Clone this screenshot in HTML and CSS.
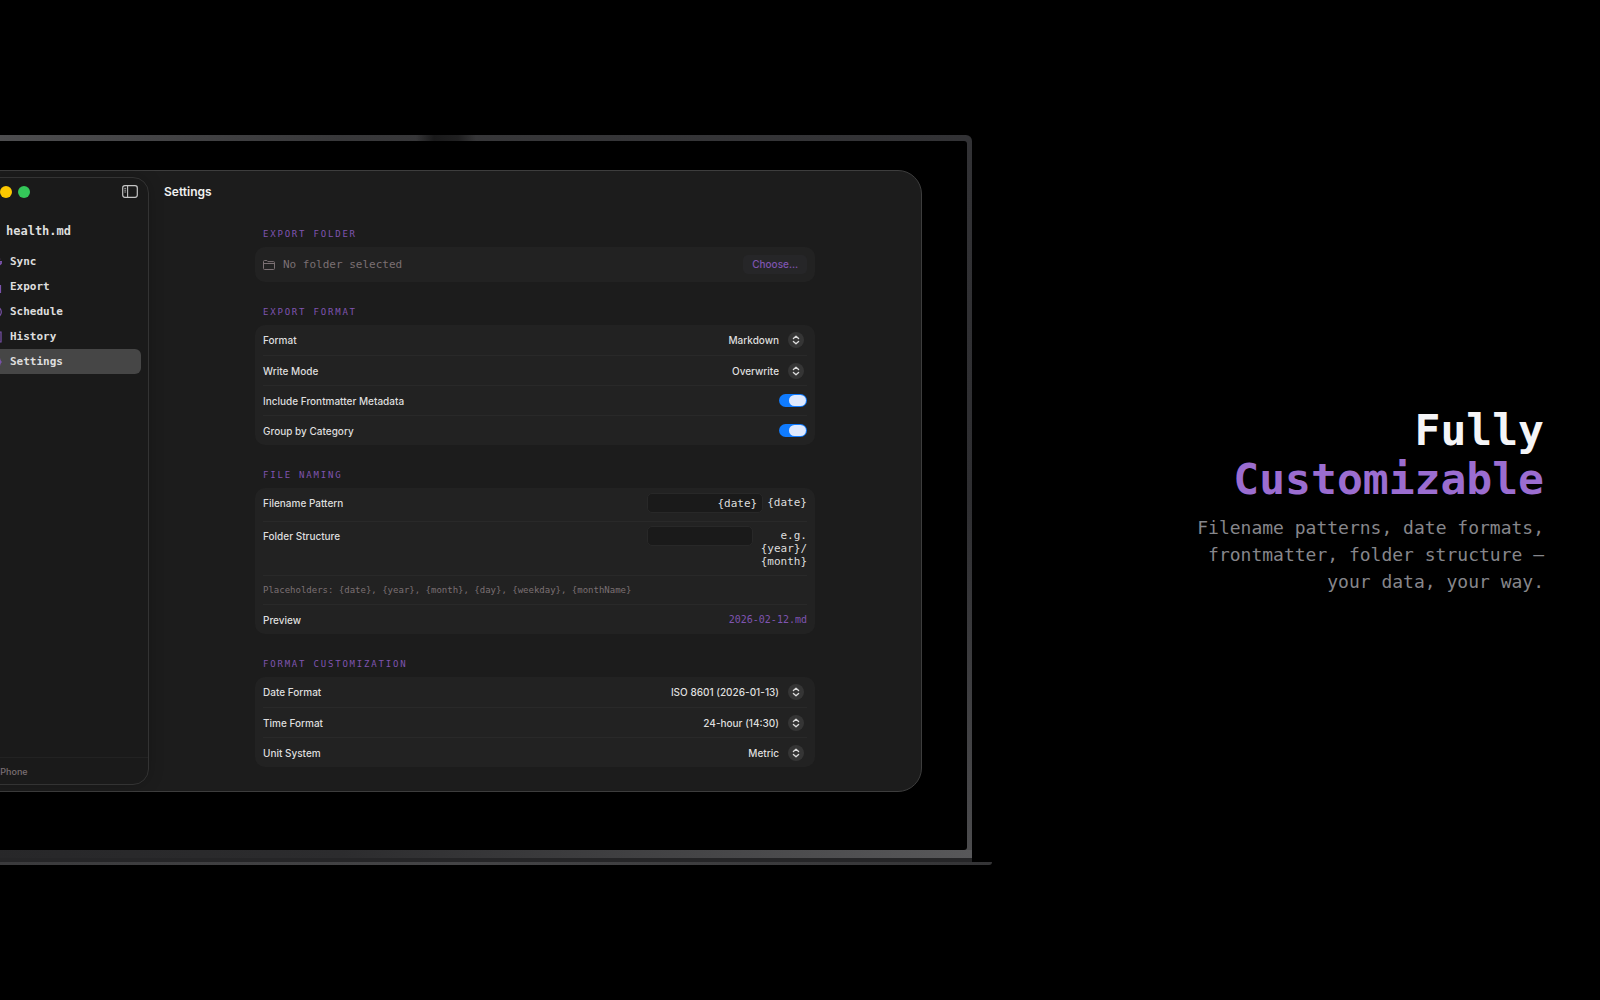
FILE: index.html
```html
<!DOCTYPE html>
<html lang="en">
<head>
    <meta charset="UTF-8">
    <meta name="viewport" content="width=device-width, initial-scale=1">
    <title>health.md - Fully Customizable</title>
    <link rel="stylesheet" href="styles.css">
</head>
<body>

    <!-- Shared icons -->
    <svg class="icon-defs" aria-hidden="true">
        <symbol id="updown" viewBox="0 0 16 16">
            <circle cx="8" cy="8" r="8" fill="#353535"/>
            <path d="M5.4 6.6 8 4.2l2.6 2.4M5.4 9.4 8 11.8l2.6-2.4" fill="none" stroke="#dcdcdc" stroke-width="1.3" stroke-linecap="round" stroke-linejoin="round"/>
        </symbol>
    </svg>

    <!-- Laptop -->
    <div class="laptop">
        <div class="lid">
            <div class="screen">
                <div class="window">

                    <!-- Sidebar -->
                    <aside class="sidebar">
                        <div class="sidebar-top">
                            <span class="light red"></span>
                            <span class="light yellow"></span>
                            <span class="light green"></span>
                            <button class="toggle-sidebar" type="button" aria-label="Toggle sidebar">
                                <svg width="16" height="13" viewBox="0 0 16 13" fill="none" stroke="#c4c4c4">
                                    <rect x="0.7" y="0.7" width="14.6" height="11.6" rx="2.2" stroke-width="1.2"/>
                                    <path d="M5.6 1v11" stroke-width="1.1"/>
                                    <path d="M2.3 3.4h1.8M2.3 5.2h1.8M2.3 7h1.8" stroke-width="0.8"/>
                                </svg>
                            </button>
                        </div>
                        <div class="brand">health.md</div>
                        <nav>
                            <a href="#sync">
                                <svg class="nav-icon" viewBox="0 0 12 12"><path d="M1 5a5 5 0 0 1 9-1.5M11 6a5 5 0 0 1-9 2.5"/><path d="M9 5.500h3.500L10.800 8zM3 6.500H-.5L1.200 4z"/></svg>
                                Sync
                            </a>
                            <a href="#export">
                                <svg class="nav-icon" viewBox="0 0 12 12"><path d="M4 4.500H1.500v7h9v-7H8M6 8V1M3.800 3 6 .8 8.200 3"/></svg>
                                Export
                            </a>
                            <a href="#schedule">
                                <svg class="nav-icon" viewBox="0 0 12 12"><circle cx="6" cy="6" r="5.300"/><path d="M6 3v3.300L8 7.500"/></svg>
                                Schedule
                            </a>
                            <a href="#history">
                                <svg class="nav-icon" viewBox="0 0 12 12"><path d="M1 1h10v10H1zM3 4h6M3 6h6M3 8h4"/></svg>
                                History
                            </a>
                            <a class="active" href="#settings">
                                <svg class="nav-icon" viewBox="0 0 12 12"><circle cx="6" cy="6" r="4.500"/><circle cx="6" cy="6" r="1.500"/><path d="M6 0v2M6 10v2M0 6h2M10 6h2M2 2l1 1M9 9l1 1M2 10l1-1M9 3l1-1"/></svg>
                                Settings
                            </a>
                        </nav>
                        <div class="device"><span class="dot"></span>iPhone</div>
                    </aside>

                    <!-- Settings -->
                    <main>
                        <h1>Settings</h1>
                        <form class="settings">

                            <section>
                                <h2>EXPORT FOLDER</h2>
                                <div class="card">
                                    <div class="row folder-row">
                                        <svg width="12" height="10" viewBox="0 0 12 10" fill="none" stroke="#7b7073" stroke-linejoin="round">
                                            <path d="M.5 8.500v-7q0-1 1-1h2.400l1 1.100h5.600q1 0 1 1v5.900q0 1-1 1h-9q-1 0-1-1zM.5 3.500h11"/>
                                        </svg>
                                        <span class="folder-name">No folder selected</span>
                                        <button class="choose" type="button">Choose…</button>
                                    </div>
                                </div>
                            </section>

                            <section>
                                <h2>EXPORT FORMAT</h2>
                                <div class="card">
                                    <div class="row">
                                        <label for="format">Format</label>
                                        <select id="format">
                                            <option>Markdown</option>
                                            <option>JSON</option>
                                            <option>CSV</option>
                                        </select>
                                        <svg class="updown"><use href="#updown"/></svg>
                                    </div>
                                    <div class="row">
                                        <label for="writeMode">Write Mode</label>
                                        <select id="writeMode">
                                            <option>Overwrite</option>
                                            <option>Append</option>
                                        </select>
                                        <svg class="updown"><use href="#updown"/></svg>
                                    </div>
                                    <div class="row">
                                        <label for="frontmatter">Include Frontmatter Metadata</label>
                                        <input class="switch" type="checkbox" id="frontmatter" checked>
                                    </div>
                                    <div class="row">
                                        <label for="group">Group by Category</label>
                                        <input class="switch" type="checkbox" id="group" checked>
                                    </div>
                                </div>
                            </section>

                            <section>
                                <h2>FILE NAMING</h2>
                                <div class="card">
                                    <div class="row field-row">
                                        <label for="filename">Filename Pattern</label>
                                        <div class="field">
                                            <input type="text" id="filename" value="{date}">
                                            <span class="hint">{date}</span>
                                        </div>
                                    </div>
                                    <div class="row field-row">
                                        <label for="folder">Folder Structure</label>
                                        <div class="field">
                                            <input type="text" id="folder">
                                            <span class="hint hint-wrap">e.g. {year}/<wbr>{month}</span>
                                        </div>
                                    </div>
                                    <div class="row placeholders">Placeholders: {date}, {year}, {month}, {day}, {weekday}, {monthName}</div>
                                    <div class="row">
                                        <span>Preview</span>
                                        <output class="preview">2026-02-12.md</output>
                                    </div>
                                </div>
                            </section>

                            <section>
                                <h2>FORMAT CUSTOMIZATION</h2>
                                <div class="card">
                                    <div class="row">
                                        <label for="dateFormat">Date Format</label>
                                        <select id="dateFormat">
                                            <option>ISO 8601 (2026-01-13)</option>
                                        </select>
                                        <svg class="updown"><use href="#updown"/></svg>
                                    </div>
                                    <div class="row">
                                        <label for="timeFormat">Time Format</label>
                                        <select id="timeFormat">
                                            <option>24-hour (14:30)</option>
                                        </select>
                                        <svg class="updown"><use href="#updown"/></svg>
                                    </div>
                                    <div class="row">
                                        <label for="units">Unit System</label>
                                        <select id="units">
                                            <option>Metric</option>
                                            <option>Imperial</option>
                                        </select>
                                        <svg class="updown"><use href="#updown"/></svg>
                                    </div>
                                </div>
                            </section>

                        </form>
                    </main>
                </div>
            </div>
        </div>
        <div class="hinge"></div>
        <div class="base"></div>
    </div>

    <!-- Caption -->
    <div class="caption">
        <p class="headline">Fully<br><span>Customizable</span></p>
        <p class="tagline">Filename patterns, date formats, frontmatter, folder structure — your data, your way.</p>
    </div>

</body>
</html>
```

FILE: styles.css
```css
* {
    box-sizing: border-box;
}

body {
    margin: 0;
    min-height: 100vh;
    display: flex;
    align-items: center;
    overflow: hidden;
    background-color: #000;
    color: #dedede;
    font-family: Inter, sans-serif;
    font-size: 10px;
    font-weight: 500;
}

h1, h2, p {
    margin: 0;
}

button, select, input {
    font: inherit;
    color: inherit;
    margin: 0;
    padding: 0;
    border: none;
    background: none;
}

.icon-defs {
    display: none;
}

/* Laptop, runs off the left edge */
.laptop {
    flex: none;
    width: calc(62% + 80px);
    margin-left: -80px;
}

.lid {
    margin-right: 20px;
    padding: 6px 5px 8px;
    border-radius: 6px 6px 0 0;
    background:
        linear-gradient(90deg, transparent, #1a1a1b 30%, #202021 70%, transparent) 50% 0 / 60px 6px no-repeat,
        linear-gradient(90deg, #525254, #38383a 40%, #323235) 0 0 / 100% 6px no-repeat,
        linear-gradient(90deg, #262628, #2c2c2e 40%, #58585a) 0 100% / 100% 8px no-repeat,
        linear-gradient(180deg, #323235, #2e2e31 50%, #4c4c4e);
}

.screen {
    padding: 29px 45px 58px;
    border-radius: 3px;
    background-color: #000;
}

.hinge {
    height: 4px;
    margin-right: 20px;
    background-color: #252527;
}

.base {
    height: 3px;
    border-radius: 0 0 3px 0;
    background: linear-gradient(90deg, #38383a, #444446 50%, #343436);
}

/* App window */
.window {
    display: flex;
    border: 1px solid #3d3d3d;
    border-radius: 24px;
    background-color: #1c1c1c;
}

.sidebar {
    display: flex;
    flex-direction: column;
    width: 172px;
    margin: 6px 0 6px 6px;
    border: 1px solid #333;
    border-radius: 16px;
    background-color: #1a1a1a;
    box-shadow: 0 0 16px rgba(0, 0, 0, 0.2);
}

.sidebar-top {
    display: flex;
    align-items: center;
    gap: 6px;
    height: 27px;
    padding: 0 10px 0 4px;
}

.light {
    width: 12px;
    height: 12px;
    border-radius: 50%;
}

.red {
    background-color: #ff5f57;
}

.yellow {
    background-color: #fdc800;
}

.green {
    background-color: #34c759;
}

.toggle-sidebar {
    display: flex;
    margin-left: auto;
}

.brand {
    margin-top: 17px;
    padding-left: 28px;
    font: bold 12px/18px "DejaVu Sans Mono", monospace;
}

nav {
    display: flex;
    flex-direction: column;
    margin-top: 9px;
    padding: 0 7px;
}

nav a {
    display: flex;
    align-items: center;
    gap: 8px;
    height: 25px;
    padding-left: 5px;
    border-radius: 6px;
    color: inherit;
    text-decoration: none;
    font: bold 11px/16px "DejaVu Sans Mono", monospace;
}

nav a.active {
    background-color: #464646;
}

.nav-icon {
    width: 12px;
    height: 12px;
    fill: none;
    stroke: #7a52ab;
    stroke-width: 1.2;
}

.device {
    display: flex;
    align-items: center;
    gap: 6px;
    height: 27px;
    margin-top: auto;
    padding-left: 8px;
    border-top: 1px solid #222;
    color: #7b7073;
    font-size: 9px;
}

.dot {
    width: 6px;
    height: 6px;
    border-radius: 50%;
    background-color: #7b7073;
}

/* Settings pane */
main {
    flex: 1;
    padding: 13px 0 24px;
}

h1 {
    padding-left: 15px;
    font-size: 12px;
    line-height: 16px;
    font-weight: 600;
    color: #f0f0f0;
}

.settings {
    display: flex;
    flex-direction: column;
    gap: 24px;
    max-width: 560px;
    margin: 28px auto 0;
}

h2 {
    margin: 0 8px 7px;
    font: 9px/12px "DejaVu Sans Mono", monospace;
    letter-spacing: 0.2em;
    color: #7f54b0;
}

.card {
    padding: 0 8px;
    border-radius: 10px;
    background-color: #222;
}

.row {
    display: flex;
    align-items: center;
    justify-content: space-between;
    height: 30px;
}

.row + .row {
    border-top: 1px solid #292929;
}

.folder-row {
    gap: 8px;
    height: 35px;
}

.folder-name {
    flex: 1;
    color: #7b7073;
    font: 11px/16px "DejaVu Sans Mono", monospace;
}

.choose {
    padding: 0 9px;
    border-radius: 5px;
    background-color: #262628;
    color: #7f54b0;
    line-height: 19px;
}

select {
    appearance: none;
    margin-left: auto;
    text-align: right;
    text-align-last: right;
}

.updown {
    width: 16px;
    height: 16px;
    margin: 0 3px 0 9px;
    pointer-events: none;
}

.switch {
    appearance: none;
    display: flex;
    justify-content: flex-end;
    width: 28px;
    height: 13px;
    padding: 1px;
    border-radius: 7px;
    background-color: #0f7bff;
}

.switch::before {
    content: "";
    width: 17px;
    border-radius: 6px;
    background-color: #dfe9fd;
}

.switch:not(:checked) {
    justify-content: flex-start;
    background-color: #464646;
}

.field-row {
    align-items: flex-start;
    height: auto;
    padding: 5px 0 8px;
    line-height: 20px;
}

.field-row + .field-row {
    padding: 4px 0 7px;
}

.field {
    display: flex;
    align-items: flex-start;
    gap: 4px;
    width: 160px;
    font: 11px/13px "DejaVu Sans Mono", monospace;
}

.field input {
    flex: 1;
    min-width: 0;
    height: 20px;
    padding: 0 5px;
    border: 1px solid #282828;
    border-radius: 5px;
    background-color: #1a1a1a;
    text-align: right;
}

.hint {
    padding-top: 3px;
    text-align: right;
}

.hint-wrap {
    width: 50px;
}

.placeholders {
    height: 29px;
    color: #7b7073;
    font: 9px/12px "DejaVu Sans Mono", monospace;
}

.preview {
    color: #7f54b0;
    font: 10px/14px "DejaVu Sans Mono", monospace;
}

/* Caption */
.caption {
    flex: 1;
    display: flex;
    flex-direction: column;
    align-items: flex-end;
    gap: 10px;
    padding-right: 56px;
    text-align: right;
    font-family: "DejaVu Sans Mono", monospace;
    font-weight: 400;
}

.headline {
    font-size: 43px;
    line-height: 49px;
    font-weight: bold;
    color: #f5f5f7;
}

.headline span {
    color: #9b6dd0;
}

.tagline {
    max-width: 360px;
    font-size: 18px;
    line-height: 27px;
    color: #86868b;
}
```
